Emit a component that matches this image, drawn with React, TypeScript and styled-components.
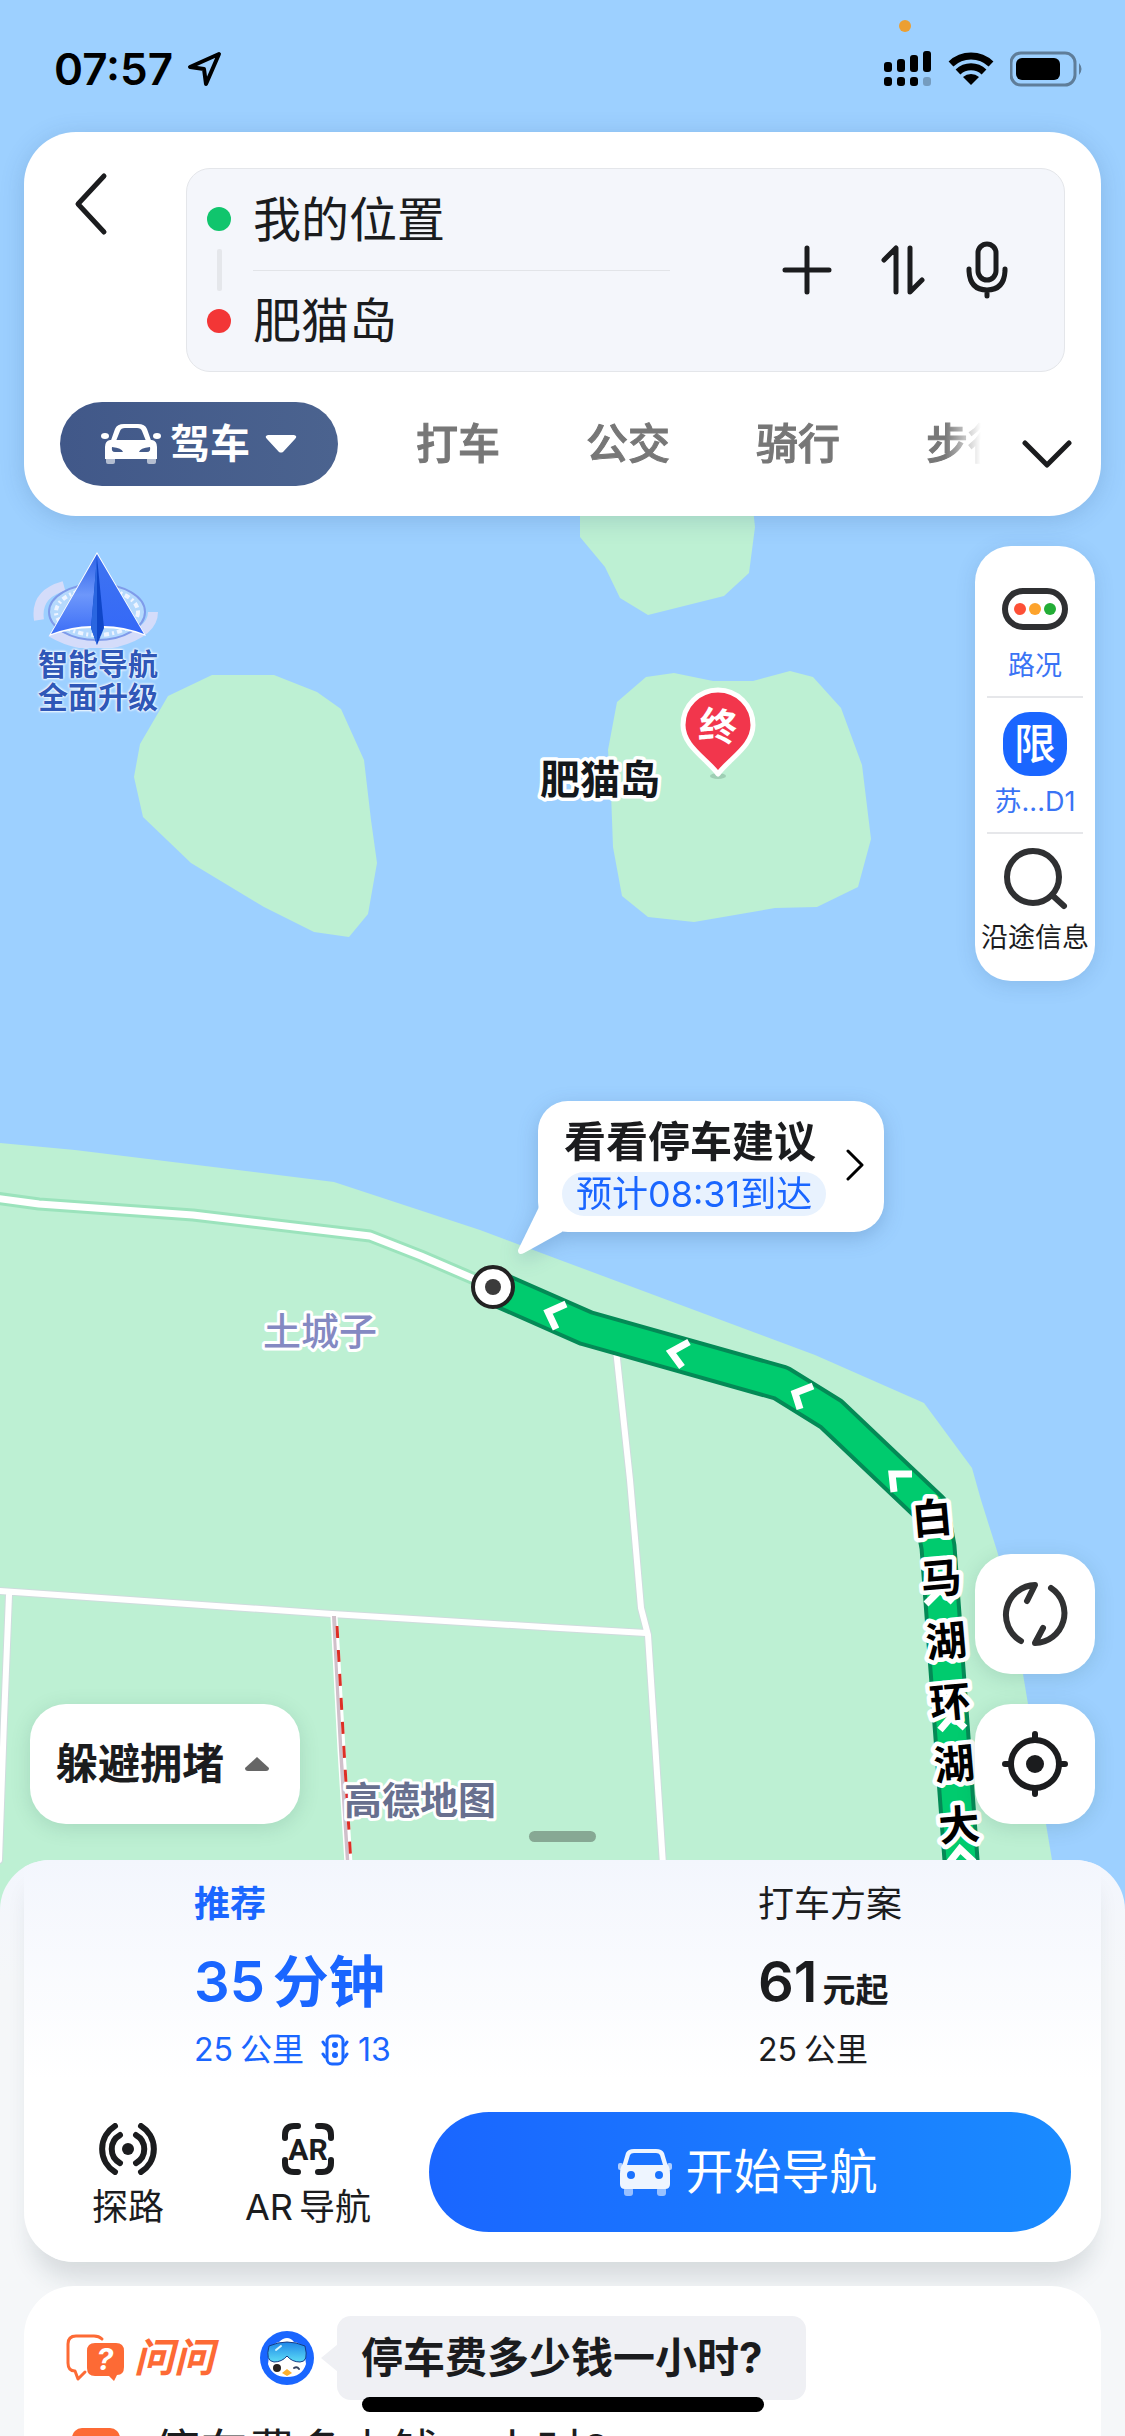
import React from 'react';
import styled, { createGlobalStyle } from 'styled-components';

const FONT = 'Inter, "Noto Sans CJK SC", "Noto Sans", sans-serif';
const INK = '#1b1c1e';
const BLUE = '#1a66ff';
const WATER = '#9dd0ff';
const LAND = '#bdf0d3';

const GlobalStyle = createGlobalStyle`
  *, *::before, *::after { box-sizing: border-box; }
  body { margin: 0; font-family: ${FONT}; color: ${INK}; background: ${WATER}; }
  button, input { font: inherit; color: inherit; border: 0; padding: 0; margin: 0; background: none; }
  button { cursor: pointer; }
  svg { display: block; flex: none; }
`;

/* ---------- frame ---------- */

const Screen = styled.div`
  position: relative;
  display: flex;
  flex-direction: column;
  height: 100vh;
  overflow: hidden;
  background: ${WATER};
`;

const MapCanvas = styled.div`
  position: absolute;
  top: 0;
  left: 0;
  width: 100%;
  & > svg { width: 100%; height: auto; }
`;

const MapLabel = styled.text<{ $size?: number; $color?: string; $halo?: number; $weight?: number }>`
  font-family: ${FONT};
  font-size: ${p => p.$size ?? 40}px;
  font-weight: ${p => p.$weight ?? 700};
  fill: ${p => p.$color ?? '#14181c'};
  stroke: #fff;
  stroke-width: ${p => p.$halo ?? 7}px;
  stroke-linejoin: round;
  paint-order: stroke;
  text-anchor: middle;
`;

const Glyph = styled.text<{ $size: number; $color: string; $weight?: number; $font?: string }>`
  font-family: ${p => p.$font ?? FONT};
  font-size: ${p => p.$size}px;
  font-weight: ${p => p.$weight ?? 700};
  fill: ${p => p.$color};
  text-anchor: middle;
`;

/* ---------- status bar ---------- */

const StatusBar = styled.header`
  position: relative;
  display: flex;
  align-items: center;
  justify-content: space-between;
  height: 132px;
  flex: none;
  padding: 6px 41px 0 54px;
  color: #000;
`;

const StatusGroup = styled.div<{ $gap: number }>`
  display: flex;
  align-items: center;
  gap: ${p => p.$gap}px;
`;

const Clock = styled.time`
  font-size: 44px;
  line-height: 52px;
  font-weight: 600;
`;

const PrivacyDot = styled.i`
  position: absolute;
  top: 20px;
  right: 214px;
  width: 12px;
  height: 12px;
  border-radius: 50%;
  background: #ec9f32;
`;

/* ---------- search card ---------- */

const SearchCard = styled.section`
  position: relative;
  flex: none;
  margin: 0 24px;
  padding: 36px 0 30px 36px;
  border-radius: 52px;
  background: #fff;
  box-shadow: 0 4px 24px rgba(40, 80, 130, 0.2);
`;

const SearchTop = styled.div`
  display: flex;
  padding-right: 36px;
`;

const BackButton = styled.button`
  display: flex;
  align-items: center;
  width: 126px;
  height: 72px;
  padding-left: 13px;
`;

const Field = styled.div`
  flex: 1;
  display: flex;
  align-items: center;
  height: 204px;
  padding: 0 56px 0 20px;
  border: 1px solid #e4e6ea;
  border-radius: 24px;
  background: #f4f6fb;
`;

const Rail = styled.div`
  display: flex;
  flex-direction: column;
  align-items: center;
  gap: 18px;
  width: 24px;
`;

const Dot = styled.i<{ $color: string }>`
  width: 24px;
  height: 24px;
  border-radius: 50%;
  background: ${p => p.$color};
`;

const RailLine = styled.i`
  width: 5px;
  height: 42px;
  border-radius: 2px;
  background: #e5e7eb;
`;

const Stops = styled.div`
  flex: 1;
  min-width: 0;
  margin: 0 112px 0 22px;
`;

const StopInput = styled.input`
  display: block;
  width: 100%;
  height: 101px;
  padding-bottom: 8px;
  font-size: 48px;
  line-height: 60px;
  outline: none;
  text-overflow: ellipsis;
  & + & { border-top: 1px solid #e2e4e8; }
`;

const FieldActions = styled.div`
  display: flex;
  align-items: center;
  gap: 41px;
`;

const IconButton = styled.button`
  display: flex;
  align-items: center;
  justify-content: center;
`;

const Modes = styled.nav`
  display: flex;
  align-items: center;
  margin-top: 30px;
  padding-right: 29px;
`;

const ActiveMode = styled.button`
  display: flex;
  align-items: center;
  justify-content: center;
  flex: none;
  gap: 9px;
  width: 278px;
  height: 84px;
  border-radius: 42px;
  color: #fff;
  font-size: 40px;
  line-height: 60px;
  font-weight: 700;
  background: linear-gradient(90deg, #415889, #4b638f);
  & > span { margin-right: 6px; }
`;

const ModeScroller = styled.div`
  flex: 1;
  min-width: 0;
  display: flex;
  gap: 86px;
  overflow: hidden;
  margin-left: 78px;
  mask-image: linear-gradient(to right, #000 calc(100% - 36px), transparent);
`;

const Mode = styled.button`
  flex: none;
  font-size: 42px;
  line-height: 60px;
  font-weight: 500;
  color: #777;
  -webkit-text-stroke: 1px #777;
`;

const ExpandButton = styled(IconButton)`
  margin-left: 41px;
  padding-top: 20px;
`;

/* ---------- floating map controls ---------- */

const MapArea = styled.main`
  position: relative;
  flex: 1;
  min-height: 0;
  display: flex;
  flex-direction: column;
  justify-content: space-between;
  padding: 30px 30px 36px;
`;

const MapRow = styled.div<{ $align: string }>`
  display: flex;
  justify-content: space-between;
  align-items: ${p => p.$align};
`;

const Promo = styled.button`
  display: flex;
  flex-direction: column;
  align-items: center;
  padding-top: 6px;
  width: 136px;
`;

const PromoText = styled.span`
  font-size: 30px;
  line-height: 33px;
  font-weight: 700;
  color: #2f57b8;
  text-shadow: 0 0 3px #fff, 0 0 3px #fff, 0 0 2px #fff;
`;

const ToolPanel = styled.div`
  width: 120px;
  padding: 14px 0 13px;
  border-radius: 36px;
  background: #fff;
  box-shadow: 0 4px 20px rgba(40, 80, 130, 0.16);
`;

const Tool = styled.button<{ $color: string }>`
  position: relative;
  display: flex;
  flex-direction: column;
  align-items: center;
  gap: 8px;
  width: 100%;
  padding: 16px 0 12px;
  font-size: 27px;
  line-height: 36px;
  white-space: nowrap;
  color: ${p => p.$color};
  &:not(:first-child)::before {
    content: '';
    position: absolute;
    top: 0;
    left: 12px;
    right: 12px;
    border-top: 2px solid #e6e7ea;
  }
`;

const FabColumn = styled.div`
  display: flex;
  flex-direction: column;
  gap: 30px;
`;

const Fab = styled.button`
  display: flex;
  align-items: center;
  justify-content: center;
  width: 120px;
  height: 120px;
  border-radius: 36px;
  background: #fff;
  box-shadow: 0 4px 20px rgba(30, 80, 70, 0.15);
`;

const Preference = styled(Fab)`
  width: 270px;
  padding-right: 5px;
  gap: 21px;
  font-size: 42px;
  line-height: 60px;
  font-weight: 700;
`;

const Grabber = styled.i`
  position: absolute;
  left: 50%;
  bottom: 18px;
  width: 67px;
  height: 11px;
  margin-left: -34px;
  border-radius: 6px;
  background: #87a894;
`;

const Callout = styled.button`
  position: absolute;
  top: 585px;
  left: 538px;
  display: flex;
  align-items: center;
  gap: 20px;
  height: 131px;
  padding: 0 20px 4px 24px;
  border-radius: 30px;
  background: #fff;
  filter: drop-shadow(0 6px 10px rgba(30, 70, 120, 0.22));
  text-align: left;
`;

const CalloutTail = styled.svg`
  position: absolute;
  left: -22px;
  top: 96px;
`;

const CalloutBody = styled.span`
  display: flex;
  flex-direction: column;
  align-items: flex-start;
  gap: 2px;
`;

const CalloutTitle = styled.strong`
  padding-left: 2px;
  font-size: 42px;
  line-height: 56px;
  font-weight: 700;
`;

const Eta = styled.span`
  padding: 0 14px;
  border-radius: 22px;
  font-size: 36px;
  line-height: 44px;
  color: ${BLUE};
  background: #e8f2fe;
`;

/* ---------- bottom sheet ---------- */

const Sheet = styled.section`
  position: relative;
  flex: none;
  height: 576px;
  overflow: hidden;
  border-radius: 50px 50px 0 0;
  background: linear-gradient(#f3f6fd, #f5f7f9 120px);
`;

const RouteCard = styled.div`
  margin: 0 24px;
  padding: 22px 0 30px;
  border-radius: 0 0 50px 50px;
  background: linear-gradient(#f3f6fd, #fff 220px);
  box-shadow: 0 24px 24px -8px rgba(30, 50, 60, 0.14);
`;

const Options = styled.div`
  display: grid;
  grid-template-columns: 564fr 343fr;
  padding-left: 170px;
`;

const Option = styled.button<{ $active?: boolean }>`
  display: flex;
  flex-direction: column;
  align-items: flex-start;
  color: ${p => (p.$active ? BLUE : INK)};
`;

const OptionName = styled.span<{ $bold?: boolean }>`
  font-size: 36px;
  line-height: 44px;
  font-weight: ${p => (p.$bold ? 700 : 400)};
`;

const OptionValue = styled.span`
  display: flex;
  align-items: baseline;
  height: 64px;
  margin: 24px 0 14px;
  font-size: 56px;
  line-height: 64px;
  font-weight: 700;
`;

const Digits = styled.span<{ $gap: number }>`
  font-weight: 600;
  margin-right: ${p => p.$gap}px;
`;

const Unit = styled.span`
  font-size: 33px;
  line-height: 40px;
`;

const OptionMeta = styled.span`
  display: flex;
  align-items: center;
  gap: 7px;
  font-size: 32px;
  line-height: 44px;
`;

const LightCount = styled.span`
  display: flex;
  align-items: center;
  gap: 9px;
  margin-left: 10px;
`;

const Actions = styled.div`
  display: flex;
  align-items: center;
  margin-top: 40px;
  padding: 0 30px 0 14px;
`;

const Action = styled.button`
  display: flex;
  flex-direction: column;
  align-items: center;
  gap: 12px;
  width: 180px;
  padding-top: 5px;
  font-size: 36px;
  line-height: 40px;
`;

const ActionLabel = styled.span`
  display: flex;
  gap: 6px;
`;

const StartButton = styled.button`
  flex: 1;
  display: flex;
  align-items: center;
  justify-content: center;
  gap: 13px;
  height: 120px;
  margin-left: 31px;
  padding-right: 4px;
  border-radius: 60px;
  color: #fff;
  font-size: 48px;
  line-height: 60px;
  background: linear-gradient(90deg, #1a66ff, #1a8bff);
`;

const AskCard = styled.div`
  margin: 24px 24px 0;
  padding: 30px 42px;
  border-radius: 50px;
  background: #fff;
`;

const AskRow = styled.div`
  display: flex;
  align-items: center;
`;

const AskBrand = styled.span`
  display: flex;
  align-items: center;
  gap: 10px;
  width: 194px;
  font-size: 40px;
  line-height: 60px;
  font-weight: 700;
  font-style: italic;
  color: #fd6a35;
`;

const Bubble = styled.button`
  position: relative;
  height: 84px;
  margin-left: 23px;
  padding: 0 43px 0 24px;
  border-radius: 14px;
  font-size: 42px;
  line-height: 60px;
  font-weight: 700;
  background: #eff0f4;
  &::before {
    content: '';
    position: absolute;
    left: -16px;
    top: 28px;
    border: solid transparent;
    border-width: 14px 17px 14px 0;
    border-right-color: #eff0f4;
  }
`;

const QuestionLink = styled.a`
  display: flex;
  align-items: center;
  gap: 32px;
  margin: 20px 0 0 6px;
  font-size: 48px;
  line-height: 64px;
  color: inherit;
  text-decoration: none;
`;

const HomeIndicator = styled.i`
  position: absolute;
  left: 50%;
  bottom: 24px;
  width: 402px;
  height: 15px;
  margin-left: -201px;
  border-radius: 8px;
  background: #000;
`;

/* ---------- drawings ---------- */

const stroke = (width: number, color = INK) => ({
  fill: 'none',
  stroke: color,
  strokeWidth: width,
  strokeLinecap: 'round' as const,
  strokeLinejoin: 'round' as const,
});

const roadName: [string, number, number][] = [
  ['白', 932, 1518], ['马', 941, 1578], ['湖', 946, 1641],
  ['环', 950, 1702], ['湖', 954, 1764], ['大', 959, 1825],
];

const ROUTE = 'M493 1287 L586 1328 L781 1383 L831 1414 L931 1509 L938 1547 L961 1860 V1900';
const LOCAL_ROADS = 'M615 1340 L630 1480 L641 1608 L648 1635 L664 1880 M0 1591 L332 1614 L560 1628 L646 1633 M9 1595 L4 1720 L-1 1860';
const SHORE_ROAD = 'M-5 1198 L39 1204 L193 1215 L370 1236 L421 1256 L493 1287';

const MapDrawing = () => (
  <svg viewBox="0 0 1125 1920" role="img" aria-label="地图">
    <g fill={LAND}>
      <path d="M212 675H274L317 692 341 709 364 760 371 820 377 863 368 914 349 937 314 932 264 907 191 863 143 817 134 777 140 744 168 696Z" />
      <path d="M580 480V537L605 567 620 598 648 615 724 596 749 573 755 527 750 480Z" />
      <path d="M617 702 646 677 674 673 713 681H753L790 671 813 677 841 708 862 765 871 839 858 887 817 907 775 908 694 922 648 917 622 896 613 847 611 793 608 750Z" />
      <path d="M0 1143 75 1150 334 1182 480 1230 560 1260 815 1355 924 1403 972 1468 981 1500 998 1554 1023 1674 1028 1704 1046 1824 1052 1860 1056 1920H0Z" />
    </g>
    <path d={SHORE_ROAD} {...stroke(13, '#9be3bc')} />
    <path d={SHORE_ROAD} {...stroke(7, '#fff')} />
    <path d={LOCAL_ROADS} {...stroke(8, '#cfdcdd')} />
    <path d={LOCAL_ROADS} {...stroke(6, '#fff')} />
    <path d="M334 1616 L341 1750 L349 1880" {...stroke(7, '#fff')} strokeLinecap="butt" />
    <path d="M334 1616 L341 1750 L349 1880" {...stroke(4, '#d0c0ca')} strokeLinecap="butt" />
    <path d="M337 1626 L344 1750 L352 1880" {...stroke(3, '#fff')} strokeLinecap="butt" />
    <path d="M337 1626 L344 1750 L352 1880" {...stroke(3, '#dd2f25')} strokeLinecap="butt" strokeDasharray="12 12" />

    <path d={ROUTE} {...stroke(37, '#048a56')} />
    <path d={ROUTE} {...stroke(29, '#00cb6e')} />
    <path
      d="M566 1304 L548 1312 L556 1329 M689 1342 L671 1352 L682 1367 M813 1386 L795 1393 L800 1409 M912 1474 L892 1474 L894 1492 M926 1604 L940 1590 L953 1602 M940 1730 L952 1716 L965 1728 M948 1864 L960 1849 L974 1862"
      {...stroke(7, '#fff')}
      strokeLinecap="butt"
      strokeLinejoin="miter"
    />
    <circle cx="493" cy="1287" r="20" fill="#fff" stroke="#222" strokeWidth="4" />
    <circle cx="493" cy="1287" r="8" fill="#3b3b3b" />

    {roadName.map(([ch, x, y], i) => (
      <g key={i} transform={`translate(${x} ${y}) rotate(-5)`}>
        <MapLabel y={15} $size={41} $color="#000" $halo={9}>{ch}</MapLabel>
      </g>
    ))}
    <MapLabel x={600} y={794}>肥猫岛</MapLabel>
    <MapLabel x={320} y={1345} $size={38} $color="#8489c2" $halo={6} $weight={500}>土城子</MapLabel>
    <MapLabel x={420} y={1814} $size={38} $color="#68708f" $halo={6}>高德地图</MapLabel>

    <ellipse cx="718" cy="776" rx="8" ry="3" fill="#7fae96" opacity="0.5" />
    <path
      d="M718 774 C706 758 683 746 683 725 A35 35 0 0 1 753 725 C753 746 730 758 718 774Z"
      fill="#f2364c"
      stroke="#fff"
      strokeWidth="5"
      strokeLinejoin="round"
    />
    <g transform="translate(718 726) rotate(6)">
      <Glyph y={14} $size={38} $color="#fff">终</Glyph>
    </g>
  </svg>
);

const LocationArrow = () => (
  <svg width="36" height="36" viewBox="0 0 36 36">
    <path d="M32 3 L3 16 L17 18 L19 33Z" {...stroke(4, '#000')} />
  </svg>
);

const Signal = () => (
  <svg width="48" height="36" viewBox="0 0 48 36">
    {[11, 8, 4, 0].map((top, i) => (
      <g key={top}>
        <rect x={i * 13} y={top} width="8" height={21 - top} rx="3" />
        <rect x={i * 13} y="26" width="8" height="9" rx="3" opacity={i === 3 ? 0.25 : 1} />
      </g>
    ))}
  </svg>
);

const Wifi = () => (
  <svg width="46" height="34" viewBox="0 0 46 34">
    <path d="M3 12 A29 29 0 0 1 43 12" {...stroke(7, '#000')} strokeLinecap="butt" />
    <path d="M10 20 A19 19 0 0 1 36 20" {...stroke(7, '#000')} strokeLinecap="butt" />
    <path d="M23 33 L15 25 A12 12 0 0 1 31 25Z" />
  </svg>
);

const Battery = () => (
  <svg width="74" height="36" viewBox="0 0 74 36">
    <rect x="1" y="2" width="64" height="32" rx="10" fill="none" stroke="#5f7d99" strokeWidth="3" />
    <rect x="6" y="7" width="44" height="22" rx="6" />
    <path d="M69 12 Q74 18 69 24Z" fill="#5f7d99" />
  </svg>
);

const DriveCar = () => (
  <svg width="60" height="42" viewBox="0 0 60 42" fill="#fff">
    <path d="M8 23 L14 6 Q16 1 23 1 H37 Q44 1 46 6 L52 23Z M15 18 H45 L41 8 Q40 5 36 5 H24 Q20 5 19 8Z" fillRule="evenodd" />
    <path d="M9 17 H51 Q56 18 56 24 V36 H4 V24 Q4 18 9 17Z M11 24 Q10 29 14 29 H22 Q21 25 11 24Z M49 24 Q50 29 46 29 H38 Q39 25 49 24Z" fillRule="evenodd" />
    <rect x="5" y="33" width="9" height="8" rx="2" opacity="0.6" />
    <rect x="46" y="33" width="9" height="8" rx="2" opacity="0.6" />
    <ellipse cx="4" cy="13" rx="4" ry="3" />
    <ellipse cx="56" cy="13" rx="4" ry="3" />
  </svg>
);

const StartCar = () => (
  <svg width="54" height="48" viewBox="0 0 54 48" fill="#eef5ff">
    <path d="M3 22 L8 5 Q10 1 16 1 H38 Q44 1 46 5 L51 22Z M9 17 H45 L42 7 Q41 5 38 5 H16 Q13 5 12 7Z" fillRule="evenodd" />
    <path d="M4 17 H50 Q52 20 52 26 V36 Q52 41 47 41 H7 Q2 41 2 36 V26 Q2 20 4 17Z M13 23 A4 4 0 1 0 13 31 A4 4 0 1 0 13 23Z M41 23 A4 4 0 1 0 41 31 A4 4 0 1 0 41 23Z" fillRule="evenodd" />
    <rect x="6" y="39" width="9" height="9" rx="3" opacity="0.6" />
    <rect x="39" y="39" width="9" height="9" rx="3" opacity="0.6" />
    <rect x="0" y="15" width="5" height="7" rx="2" opacity="0.7" />
    <rect x="49" y="15" width="5" height="7" rx="2" opacity="0.7" />
  </svg>
);

const PromoArt = () => (
  <svg width="134" height="96" viewBox="0 0 134 96">
    <defs>
      <linearGradient id="wingL" x1="0" y1="0" x2="0" y2="1">
        <stop offset="0" stopColor="#2c61e6" />
        <stop offset="0.5" stopColor="#6d97fb" />
        <stop offset="1" stopColor="#3a6cf6" />
      </linearGradient>
      <linearGradient id="wingR" x1="0" y1="0" x2="0" y2="1">
        <stop offset="0" stopColor="#3f74f0" />
        <stop offset="1" stopColor="#3468f8" />
      </linearGradient>
    </defs>
    <path d="M8 68 Q4 42 33 34" {...stroke(10, '#d4dcfa')} strokeLinecap="butt" />
    <path d="M20 80 Q50 98 86 90 Q122 80 122 60" {...stroke(10, '#d4dcfa')} strokeLinecap="butt" />
    <ellipse cx="66" cy="60" rx="48" ry="28" fill="#b5d9fd" stroke="#7f9bea" strokeWidth="2" />
    <ellipse cx="66" cy="60" rx="41" ry="23" fill="none" stroke="#eef4ff" strokeWidth="4" strokeDasharray="5 3 2 3" />
    <path d="M66 0 L18 84 Q42 75 66 76 Q92 75 115 84Z" fill="#fff" />
    <path d="M66 2 L20 82 Q42 74 60 74 L66 84Z" fill="url(#wingL)" />
    <path d="M66 2 L113 82 Q92 74 73 74 L66 84Z" fill="url(#wingR)" />
    <path d="M66 5 L60 76 L66 93 L73 76Z" fill="#0f46c8" />
    <path d="M66 5 L60 76 L66 93Z" fill="#2a66e0" />
  </svg>
);

const TrafficIcon = () => (
  <svg width="66" height="64" viewBox="0 0 66 64">
    <rect x="3" y="15" width="60" height="36" rx="18" {...stroke(6, '#2f3032')} />
    <circle cx="18" cy="33" r="6" fill="#fd5036" />
    <circle cx="33" cy="33" r="6" fill="#fda32c" />
    <circle cx="48" cy="33" r="6" fill="#23ad36" />
  </svg>
);

const LimitIcon = () => (
  <svg width="64" height="64" viewBox="0 0 64 64">
    <rect width="64" height="64" rx="27" fill={BLUE} />
    <Glyph x={32} y={47} $size={42} $color="#fff" $weight={500}>限</Glyph>
  </svg>
);

const SearchIcon = () => (
  <svg width="66" height="64" viewBox="0 0 66 64">
    <circle cx="31" cy="29" r="26" {...stroke(6, '#2f3032')} />
    <path d="M50 47 L62 58" {...stroke(6, '#2f3032')} />
  </svg>
);

const RefreshIcon = () => (
  <svg width="66" height="66" viewBox="0 0 66 66" {...stroke(6, '#303132')}>
    <path d="M19 60 A30 30 0 0 1 33 4 L25 20" />
    <path d="M49 7 A30 30 0 0 1 33 62 L41 47" />
  </svg>
);

const LocateIcon = () => (
  <svg width="66" height="66" viewBox="0 0 66 66">
    <circle cx="33" cy="33" r="24" {...stroke(6)} />
    <circle cx="33" cy="33" r="9" fill={INK} />
    <path d="M33 3V9M33 57V63M3 33H9M57 33H63" {...stroke(6)} />
  </svg>
);

const LightIcon = () => (
  <svg width="28" height="32" viewBox="0 0 28 32">
    <rect x="6" y="2" width="16" height="28" rx="5" {...stroke(3, BLUE)} />
    <circle cx="14" cy="11" r="3" fill={BLUE} />
    <circle cx="14" cy="21" r="3" fill={BLUE} />
    <path d="M2 8 L4 11M26 8 L24 11M2 20 L4 23M26 20 L24 23" {...stroke(3, BLUE)} />
  </svg>
);

const RadarIcon = () => (
  <svg width="62" height="52" viewBox="0 0 62 52">
    <circle cx="31" cy="26" r="6" fill={INK} />
    <path d="M23 12 A16 16 0 0 0 23 40M39 12 A16 16 0 0 1 39 40M18 3 A27 27 0 0 0 18 49M44 3 A27 27 0 0 1 44 49" {...stroke(6)} />
  </svg>
);

const ArIcon = () => (
  <svg width="52" height="52" viewBox="0 0 52 52">
    <path d="M3 15V12Q3 3 12 3H16M36 3H40Q49 3 49 12V15M49 37V40Q49 49 40 49H36M16 49H12Q3 49 3 40V37" {...stroke(6)} />
    <Glyph x={26} y={37} $size={30} $color={INK} $font="Roboto, sans-serif">AR</Glyph>
  </svg>
);

const AskIcon = () => (
  <svg width="58" height="48" viewBox="0 0 58 48">
    <path d="M36 5 Q33 2 28 2H10Q2 2 2 10V29Q2 37 9 37L12 45L19 38" {...stroke(3, '#fd6a35')} />
    <path d="M29 9H50Q58 9 58 17V33Q58 41 51 41L48 47L43 42H29Q21 42 21 34V17Q21 9 29 9Z" fill="#fd6a35" />
    <Glyph x={39} y={36} $size={30} $color="#fff">?</Glyph>
  </svg>
);

const Mascot = () => (
  <svg width="54" height="54" viewBox="0 0 54 54">
    <defs>
      <linearGradient id="goggle" x1="0" y1="0" x2="0" y2="1">
        <stop offset="0" stopColor="#1e86e8" />
        <stop offset="1" stopColor="#5ddcf5" />
      </linearGradient>
    </defs>
    <circle cx="27" cy="27" r="27" fill={BLUE} />
    <path d="M10 18 Q14 12 19 11 Q23 7 27 7 Q31 7 34 11 Q41 12 44 18L46 33Q42 46 27 46Q12 46 8 33Z" fill="#fff" />
    <path d="M9 15 Q27 7 45 15 Q49 31 40 31 Q32 31 27 25 Q22 31 14 31 Q5 30 9 15Z" fill="url(#goggle)" stroke="#163c86" strokeWidth="1" />
    <path d="M16 19L21 15" {...stroke(2, '#d8f7ff')} />
    <circle cx="17" cy="37" r="4" fill="#27221f" />
    <path d="M34 37Q37 35 39 38" {...stroke(2, '#33415e')} />
    <path d="M27 38L32 42L27 45L22 42Z" fill="#fdb02e" />
  </svg>
);

export default function App() {
  return (
    <>
      <GlobalStyle />
      <Screen>
        <MapCanvas><MapDrawing /></MapCanvas>

        <StatusBar>
          <StatusGroup $gap={14}>
            <Clock>07:57</Clock>
            <LocationArrow />
          </StatusGroup>
          <PrivacyDot />
          <StatusGroup $gap={16}>
            <Signal />
            <Wifi />
            <Battery />
          </StatusGroup>
        </StatusBar>

        <SearchCard>
          <SearchTop>
            <BackButton aria-label="返回">
              <svg width="36" height="64" viewBox="0 0 36 64"><path d="M31 4 L5 32 L31 60" {...stroke(5)} /></svg>
            </BackButton>
            <Field>
              <Rail>
                <Dot $color="#10c56d" />
                <RailLine />
                <Dot $color="#f33636" />
              </Rail>
              <Stops>
                <StopInput aria-label="起点" defaultValue="我的位置" />
                <StopInput aria-label="终点" defaultValue="肥猫岛" />
              </Stops>
              <FieldActions>
                <IconButton aria-label="添加途经点">
                  <svg width="56" height="50" viewBox="0 0 56 50"><path d="M25 3V47M3 25H47" {...stroke(5)} /></svg>
                </IconButton>
                <IconButton aria-label="交换起终点">
                  <svg width="46" height="50" viewBox="0 0 46 50">
                    <path d="M5 15L17 3V47M31 3V47L43 35" {...stroke(5)} />
                  </svg>
                </IconButton>
                <IconButton aria-label="语音输入">
                  <svg width="42" height="58" viewBox="0 0 42 58">
                    <rect x="12" y="3" width="18" height="36" rx="9" {...stroke(5)} />
                    <path d="M3 28V30Q4 49 21 49Q38 49 39 30V28M21 49V55" {...stroke(5)} />
                  </svg>
                </IconButton>
              </FieldActions>
            </Field>
          </SearchTop>
          <Modes>
            <ActiveMode>
              <DriveCar />
              <span>驾车</span>
              <svg width="32" height="18" viewBox="0 0 32 18"><path d="M3 0H29Q33 1 30 4L18 17Q16 18 14 17L2 4Q-1 1 3 0Z" fill="#fff" /></svg>
            </ActiveMode>
            <ModeScroller>
              {['打车', '公交', '骑行', '步行'].map(m => <Mode key={m}>{m}</Mode>)}
            </ModeScroller>
            <ExpandButton aria-label="展开">
              <svg width="50" height="28" viewBox="0 0 50 28"><path d="M3 3L25 25L47 3" {...stroke(5)} /></svg>
            </ExpandButton>
          </Modes>
        </SearchCard>

        <MapArea>
          <MapRow $align="flex-start">
            <Promo>
              <PromoArt />
              <PromoText>智能导航</PromoText>
              <PromoText>全面升级</PromoText>
            </Promo>
            <ToolPanel>
              <Tool $color="#3a74f5"><TrafficIcon />路况</Tool>
              <Tool $color="#3a74f5"><LimitIcon />苏...D1</Tool>
              <Tool $color={INK}><SearchIcon />沿途信息</Tool>
            </ToolPanel>
          </MapRow>

          <Callout>
            <CalloutTail width="50" height="60" viewBox="0 0 50 60">
              <path d="M24 8 L2 53 Q2 59 8 56 L46 35 Q50 20 40 8Z" fill="#fff" />
            </CalloutTail>
            <CalloutBody>
              <CalloutTitle>看看停车建议</CalloutTitle>
              <Eta>预计08:31到达</Eta>
            </CalloutBody>
            <svg width="18" height="32" viewBox="0 0 18 32"><path d="M2 2L16 16L2 30" {...stroke(3, '#000')} /></svg>
          </Callout>

          <MapRow $align="flex-end">
            <Preference>
              躲避拥堵
              <svg width="24" height="14" viewBox="0 0 24 14"><path d="M12 0L24 11Q24 14 21 14H3Q0 14 0 11Z" fill="#666" /></svg>
            </Preference>
            <FabColumn>
              <Fab aria-label="刷新"><RefreshIcon /></Fab>
              <Fab aria-label="定位"><LocateIcon /></Fab>
            </FabColumn>
          </MapRow>
          <Grabber />
        </MapArea>

        <Sheet>
          <RouteCard>
            <Options>
              <Option $active>
                <OptionName $bold>推荐</OptionName>
                <OptionValue><Digits $gap={8}>35</Digits>分钟</OptionValue>
                <OptionMeta>
                  <span>25</span><span>公里</span>
                  <LightCount><LightIcon />13</LightCount>
                </OptionMeta>
              </Option>
              <Option>
                <OptionName>打车方案</OptionName>
                <OptionValue><Digits $gap={5}>61</Digits><Unit>元起</Unit></OptionValue>
                <OptionMeta><span>25</span><span>公里</span></OptionMeta>
              </Option>
            </Options>
            <Actions>
              <Action><RadarIcon />探路</Action>
              <Action>
                <ArIcon />
                <ActionLabel><span>AR</span><span>导航</span></ActionLabel>
              </Action>
              <StartButton><StartCar />开始导航</StartButton>
            </Actions>
          </RouteCard>
          <AskCard>
            <AskRow>
              <AskBrand><AskIcon />问问</AskBrand>
              <Mascot />
              <Bubble>停车费多少钱一小时?</Bubble>
            </AskRow>
            <QuestionLink href="#question">
              <svg width="48" height="48" viewBox="0 0 48 48">
                <rect width="48" height="48" rx="10" fill="#fd6a35" />
                <path d="M12 12L20 20" {...stroke(4, '#fff')} />
              </svg>
              停车费多少钱一小时?
            </QuestionLink>
          </AskCard>
        </Sheet>
        <HomeIndicator />
      </Screen>
    </>
  );
}
